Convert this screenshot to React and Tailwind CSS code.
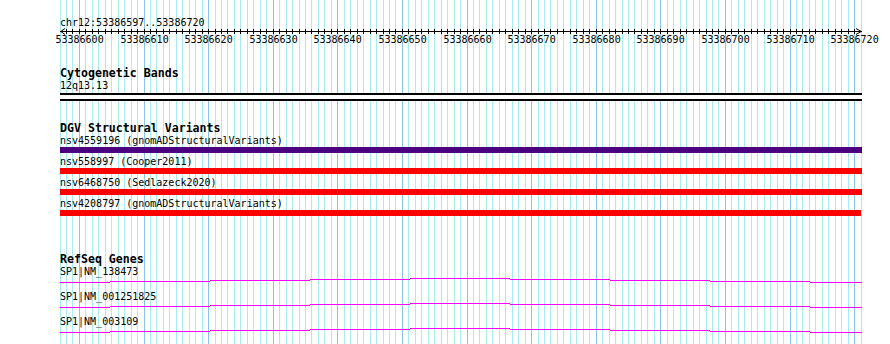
const PITCH = 6.46;
const gx = (k) => Math.floor(60.02 + k * PITCH);

const GRID = Array.from({ length: 125 }, (_, k) => k);
const LABELS = Array.from({ length: 13 }, (_, i) => ({ k: 3 + i * 10, text: String(53386600 + i * 10) }));

const VARIANTS = [
  { label: "nsv4559196 (gnomADStructuralVariants)", color: "bg-[#4b0082]", w: "w-[802px]" },
  { label: "nsv558997 (Cooper2011)", color: "bg-[#ff0000]", w: "w-[802px]" },
  { label: "nsv6468750 (Sedlazeck2020)", color: "bg-[#ff0000]", w: "w-[802px]" },
  { label: "nsv4208797 (gnomADStructuralVariants)", color: "bg-[#ff0000]", w: "w-[801px]" },
];

const GENES = ["SP1|NM_138473", "SP1|NM_001251825", "SP1|NM_003109"];

const SEGS = [
  [0, 50, 4],
  [50, 150, 3],
  [150, 250, 2],
  [250, 350, 1],
  [350, 450, 0],
  [450, 550, 1],
  [550, 650, 2],
  [650, 750, 3],
  [750, 802, 4],
];

function GeneLine() {
  return (
    <svg width="802" height="7" className="block">
      {SEGS.map(([a, b, y], i) => (
        <rect key={i} x={a} y={y} width={b - a} height={1} fill="#ff00ff" />
      ))}
    </svg>
  );
}

export default function App() {
  return (
    <div className="relative w-[890px] h-[344px] overflow-hidden bg-white text-black font-['DejaVu_Sans_Mono',monospace]">
      <svg className="absolute left-0 top-0" width="890" height="344">
        {GRID.map((k) => (
          <rect key={k} x={gx(k)} y={0} width={1} height={344} fill={k % 10 === 3 ? "#88c4e6" : "#a9ebee"} />
        ))}
      </svg>

      <div className="relative flex flex-col pl-[60px] w-[862px]">
        {/* Ruler */}
        <div className="mt-[17px] h-[11px] text-[10px] leading-[11px] whitespace-nowrap">chr12:53386597..53386720</div>
        <div className="relative h-[18px] w-[802px]">
          <svg className="absolute left-0 top-0" width="803" height="8">
            <rect x={0} y={3} width={802} height={1} fill="#000" />
            {GRID.slice(1, 124).map((k) => (
              <rect key={k} x={gx(k) - 60} y={1} width={1} height={5} fill="#000" />
            ))}
            <polyline points="5,0.5 0.8,3.5 5,6.5" fill="none" stroke="#000" strokeWidth="1" />
            <polyline points="796,0.5 801.2,3.5 796,6.5" fill="none" stroke="#000" strokeWidth="1" />
          </svg>
          {LABELS.map(({ k, text }) => (
            <div
              key={k}
              className="absolute top-[6px] w-[48px] text-center text-[10px] leading-[12px] whitespace-nowrap"
              style={{ left: gx(k) - 60 + 0.5 - 24 }}
            >
              {text}
            </div>
          ))}
        </div>

        {/* Cytogenetic Bands */}
        <div className="mt-[21px] h-[13px] text-[11.6px] font-bold leading-[13px] whitespace-nowrap">Cytogenetic Bands</div>
        <div className="h-[12px] text-[10px] leading-[12px] whitespace-nowrap">12q13.13</div>
        <div className="mt-[1px] h-[8px] w-[802px] border-y-2 border-black bg-white" />

        {/* DGV */}
        <div className="mt-[21px] h-[13px] text-[11.6px] font-bold leading-[13px] whitespace-nowrap">DGV Structural Variants</div>
        <div className="flex flex-col gap-[3px]">
          {VARIANTS.map((v) => (
            <div key={v.label} className="flex flex-col">
              <div className="h-[12px] text-[10px] leading-[12px] whitespace-nowrap">{v.label}</div>
              <div className={`h-[6px] ${v.w} ${v.color}`} />
            </div>
          ))}
        </div>

        {/* RefSeq */}
        <div className="mt-[37px] h-[13px] text-[11.6px] font-bold leading-[13px] whitespace-nowrap">RefSeq Genes</div>
        <div className="flex flex-col gap-[6px]">
          {GENES.map((g) => (
            <div key={g} className="flex flex-col">
              <div className="h-[12px] text-[10px] leading-[12px] whitespace-nowrap">{g}</div>
              <GeneLine />
            </div>
          ))}
        </div>
      </div>
    </div>
  );
}
